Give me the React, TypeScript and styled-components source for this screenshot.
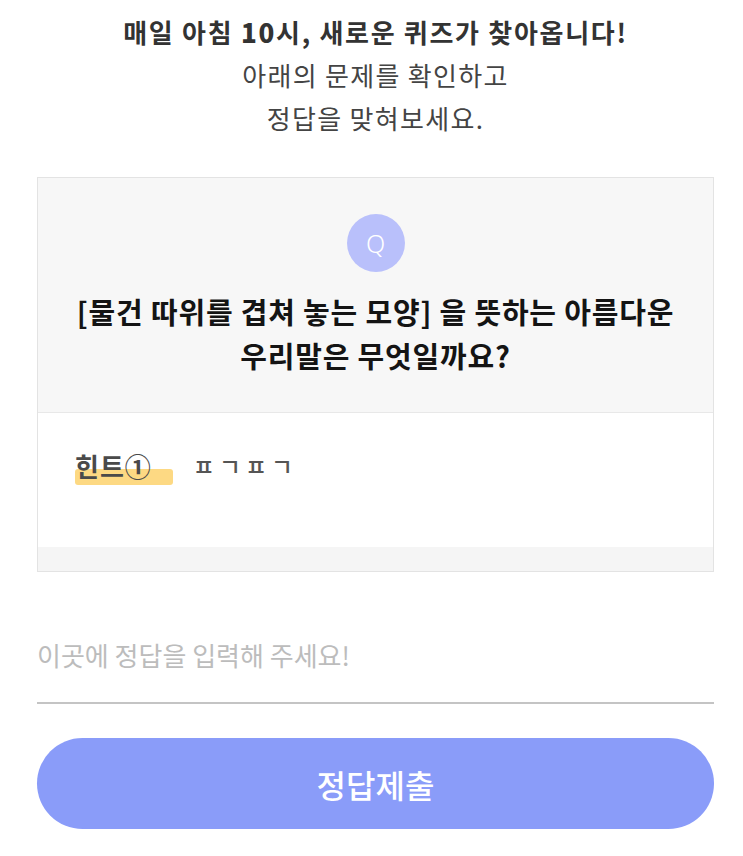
import React from 'react';
import styled, { createGlobalStyle } from 'styled-components';

const GlobalStyle = createGlobalStyle`
    html, body {
        margin: 0;
        padding: 0;
        background: #ffffff;
    }
    body {
        font-family: "Noto Sans CJK KR", "Noto Sans", sans-serif;
    }
`;

const Page = {
    Wrapper: styled.div`
        width: 743px;
        box-sizing: border-box;
        padding: 10px 29px 0 37px;
        display: flex;
        flex-direction: column;
    `,
    Intro: styled.div`
        text-align: center;
        color: #444;
        font-size: 26px;
        line-height: 43px;
        letter-spacing: 1.3px;
    `,
    IntroLead: styled.div`
        font-weight: 600;
        color: #333;
        letter-spacing: 1.7px;
        b {
            font-weight: 800;
        }
    `
};

const Card = {
    Wrapper: styled.div`
        margin-top: 38px;
        border: 1px solid #e3e3e3;
        display: flex;
        flex-direction: column;
    `,
    Question: styled.div`
        background: #f7f7f7;
        border-bottom: 1px solid #e8e8e8;
        display: flex;
        flex-direction: column;
        align-items: center;
        padding: 36px 20px 35px;
    `,
    Badge: styled.div`
        width: 58px;
        height: 58px;
        border-radius: 50%;
        background: #b9c0fb;
        color: #ffffff;
        display: flex;
        align-items: center;
        justify-content: center;
        font-family: "Noto Sans", sans-serif;
        font-weight: 300;
        font-size: 25px;
    `,
    Title: styled.div`
        margin-top: 17px;
        text-align: center;
        font-size: 29px;
        font-weight: 700;
        line-height: 44px;
        color: #141414;
        letter-spacing: 0.8px;
    `,
    Hint: styled.div`
        background: #ffffff;
        height: 134px;
        padding: 34px 0 0 37px;
        box-sizing: border-box;
        display: flex;
        align-items: flex-start;
        gap: 20px;
    `,
    Footer: styled.div`
        background: #f5f5f5;
        height: 24px;
    `
};

const HintLabel = styled.span`
    position: relative;
    font-size: 26px;
    font-weight: 600;
    color: #4a4a4a;
    line-height: 38px;
    letter-spacing: 1px;
    padding-right: 21px;
    z-index: 0;
    &::after {
        content: '';
        position: absolute;
        left: 0;
        right: 0;
        top: 22px;
        height: 16px;
        background: #fdd983;
        border-radius: 3px;
        z-index: -1;
    }
`;

const HintText = styled.span`
    font-size: 24px;
    font-weight: 500;
    color: #555;
    line-height: 38px;
    letter-spacing: 4px;
`;

const Answer = {
    Field: styled.input`
        margin-top: 62px;
        border: none;
        border-bottom: 2px solid #c4c4c4;
        outline: none;
        background: transparent;
        font-family: "Noto Sans CJK KR", "Noto Sans", sans-serif;
        font-size: 26px;
        padding: 0 0 28px 0;
        height: 70px;
        box-sizing: border-box;
        letter-spacing: 0;
        color: #333;
        &::placeholder {
            color: #bcbcbc;
        }
    `,
    Submit: styled.button`
        margin-top: 34px;
        height: 91px;
        border: none;
        border-radius: 46px;
        background: #8a9cf9;
        color: #ffffff;
        font-family: "Noto Sans CJK KR", "Noto Sans", sans-serif;
        font-size: 32px;
        font-weight: 500;
        cursor: pointer;
    `
};

const App: React.FC = () => {
    return (<>
        <GlobalStyle />
        <Page.Wrapper>
            <Page.Intro>
                <Page.IntroLead>매일 아침 <b>10</b>시, 새로운 퀴즈가 찾아옵니다!</Page.IntroLead>
                <div>아래의 문제를 확인하고</div>
                <div>정답을 맞혀보세요.</div>
            </Page.Intro>
            <Card.Wrapper>
                <Card.Question>
                    <Card.Badge>Q</Card.Badge>
                    <Card.Title>
                        [물건 따위를 겹쳐 놓는 모양] 을 뜻하는 아름다운<br />
                        우리말은 무엇일까요?
                    </Card.Title>
                </Card.Question>
                <Card.Hint>
                    <HintLabel>힌트①</HintLabel>
                    <HintText>ㅍㄱㅍㄱ</HintText>
                </Card.Hint>
                <Card.Footer />
            </Card.Wrapper>
            <Answer.Field placeholder="이곳에 정답을 입력해 주세요!" />
            <Answer.Submit>정답제출</Answer.Submit>
        </Page.Wrapper>
    </>);
};

export default App;
